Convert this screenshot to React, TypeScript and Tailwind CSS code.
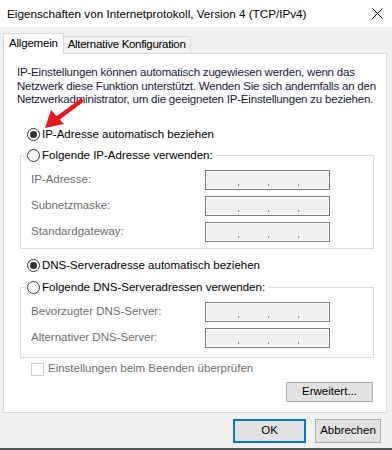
import React from "react"

const font = { fontFamily: '"Liberation Sans", Arial, sans-serif' }

const Radio = ({ checked, label }: { checked?: boolean, label: string }) => (
  <div className="flex items-center h-[14px]">
    <span className="w-[13px] h-[13px] rounded-full border border-[#333333] bg-white flex items-center justify-center">
      {checked && <span className="w-[7px] h-[7px] rounded-full bg-[#333333]" />}
    </span>
    <span className="ml-[2px] text-[11.5px] text-black whitespace-nowrap">{label}</span>
  </div>
)

const IpInput = () => (
  <div className="w-[125px] h-[20px] border border-[#7a7a7a] bg-[#f0f0f0] shadow-[inset_0_0_0_1px_#ffffff] flex items-end pb-[3px] pl-[3px]">
    {[0, 1, 2].map((i) => (
      <span key={i} className="w-[30px] flex justify-end">
        <span className="w-[1px] h-[2px] bg-[#8a86a8]" />
      </span>
    ))}
  </div>
)

const FieldRow = ({ label }: { label: string }) => (
  <div className="flex items-center h-[20px]">
    <span className="w-[174px] text-[11.5px] text-[#6d6d6d] whitespace-nowrap">{label}</span>
    <IpInput />
  </div>
)

const GroupBox = ({ legend, rows, className }: { legend: string, rows: string[], className?: string }) => (
  <fieldset className={`border border-[#dcdcdc] px-[6px] ${className}`}>
    <legend className="pr-[3px]">
      <Radio label={legend} />
    </legend>
    <div className="pl-[4px] pt-[7px] flex flex-col gap-[6px]">
      {rows.map((r) => (
        <FieldRow key={r} label={r} />
      ))}
    </div>
  </fieldset>
)

export default function App() {
  return (
    <div className="w-[392px] h-[450px] bg-[#f0f0f0] flex flex-col overflow-hidden" style={font}>
      <div className="h-[27px] bg-white flex items-center justify-between pl-[7px] pr-[9px] shrink-0">
        <span className="text-[11.7px] text-black">Eigenschaften von Internetprotokoll, Version 4 (TCP/IPv4)</span>
        <svg width="11" height="11" viewBox="0 0 11 11">
          <path d="M0.5 0.5 L10.5 10.5 M10.5 0.5 L0.5 10.5" stroke="#111" strokeWidth="1" />
        </svg>
      </div>

      <div className="flex items-end pl-[3px] pt-[6px] relative z-10">
        <div className="h-[21px] -mb-[1px] bg-white border border-b-0 border-[#d9d9d9] px-[5px] flex items-center text-[11.5px] text-black tracking-[-0.2px]">
          Allgemein
        </div>
        <div className="h-[17px] bg-[#f0f0f0] border border-l-0 border-b-0 border-[#d9d9d9] px-[4px] flex items-center text-[11.5px] text-black tracking-[-0.3px]">
          Alternative Konfiguration
        </div>
      </div>

      <div className="relative mx-[3px] w-[384px] bg-white border border-[#d9d9d9] pl-[13px] pr-[12px] pt-[12px] pb-[10px] flex flex-col">
        <p className="text-[11.5px] leading-[13.5px] text-[#1a1a3a] tracking-[-0.2px] whitespace-nowrap">
          IP-Einstellungen können automatisch zugewiesen werden, wenn das<br />
          Netzwerk diese Funktion unterstützt. Wenden Sie sich andernfalls an den<br />
          Netzwerkadministrator, um die geeigneten IP-Einstellungen zu beziehen.
        </p>

        <div className="mt-[21px] pl-[10px]">
          <Radio checked label="IP-Adresse automatisch beziehen" />
        </div>

        <GroupBox className="mt-[7px] ml-[3px] pb-[6px]" legend="Folgende IP-Adresse verwenden:" rows={['IP-Adresse:', 'Subnetzmaske:', 'Standardgateway:']} />

        <div className="mt-[10px] pl-[10px]">
          <Radio checked label="DNS-Serveradresse automatisch beziehen" />
        </div>

        <GroupBox className="mt-[8px] ml-[3px] pb-[9px]" legend="Folgende DNS-Serveradressen verwenden:" rows={['Bevorzugter DNS-Server:', 'Alternativer DNS-Server:']} />

        <div className="mt-[5px] pl-[14px] flex items-center h-[13px]">
          <span className="w-[13px] h-[13px] border border-[#cccccc] bg-white" />
          <span className="ml-[4px] text-[11.5px] text-[#6d6d6d]">Einstellungen beim Beenden überprüfen</span>
        </div>

        <div className="mt-[6px] flex justify-end pr-[1px]">
          <button className="w-[87px] h-[20px] bg-[#e1e1e1] border border-[#adadad] text-[11.5px] text-black">
            Erweitert...
          </button>
        </div>

        <svg className="absolute left-[36px] top-[43px]" width="46" height="36" viewBox="0 0 46 36">
          <path d="M41 4 L18 21" stroke="#e8161e" strokeWidth="4.5" strokeLinecap="round" />
          <path d="M5 31 L11 13 L24 27 Z" fill="#e8161e" />
        </svg>
      </div>

      <div className="flex justify-end gap-[9px] pr-[11px] mt-[6px]">
        <button className="w-[73px] h-[24px] bg-[#e1e1e1] border-2 border-[#0078d7] text-[11.5px] text-black">OK</button>
        <button className="w-[66px] h-[24px] bg-[#e1e1e1] border border-[#adadad] text-[11.5px] text-black">Abbrechen</button>
      </div>

      <div className="mt-auto h-[2px] bg-[#555555]" />
    </div>
  )
}
